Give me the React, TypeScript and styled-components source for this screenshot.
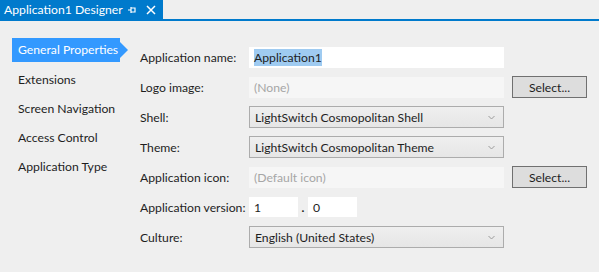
import React from "react";
import styled, { createGlobalStyle } from "styled-components";

const Global = createGlobalStyle`
  html, body { margin: 0; padding: 0; background: #efefef; }
  body { font-family: Lato, "Noto Sans", sans-serif; font-size: 12.2px; color: #1e1e1e; }
  * { box-sizing: border-box; }
`;

const Page = styled.div`
  width: 599px;
  height: 272px;
  background: #efefef;
  overflow: hidden;
`;

const TabStrip = styled.div`
  display: flex;
  border-bottom: 2px solid #007acc;
`;

const Tab = styled.div`
  display: flex;
  align-items: center;
  width: 163px;
  height: 19px;
  background: #007acc;
  color: #fff;
  padding-left: 4px;
  font-size: 12.2px;
`;

const TabTitle = styled.span`
  flex: 1;
  white-space: nowrap;
`;

const TabIcon = styled.span`
  display: flex;
  align-items: center;
  justify-content: center;
  width: 14px;
  height: 14px;
  margin-right: 5px;
`;

const Body = styled.div`
  display: flex;
  padding: 17px 0 0 12px;
`;

const Nav = styled.nav`
  display: flex;
  flex-direction: column;
  gap: 5px;
  width: 116px;
  margin-right: 12px;
`;

const NavItem = styled.div<{ $active?: boolean }>`
  position: relative;
  height: 24px;
  line-height: 24px;
  padding-left: 6px;
  width: 108px;
  white-space: nowrap;
  background: ${(p) => (p.$active ? "#3399ff" : "transparent")};
  color: ${(p) => (p.$active ? "#fff" : "#1e1e1e")};
  margin-bottom: ${(p) => (p.$active ? "1px" : "0")};
  &::after {
    content: "";
    display: ${(p) => (p.$active ? "block" : "none")};
    position: absolute;
    right: -8px;
    top: 4px;
    border-style: solid;
    border-width: 8px 0 8px 8px;
    border-color: transparent transparent transparent #3399ff;
  }
`;

const Form = styled.div`
  display: grid;
  grid-template-columns: 109px 255px 8px 75px;
  grid-auto-rows: 30px;
  margin-top: 4px;
  align-items: center;
`;

const Label = styled.div`
  white-space: nowrap;
  grid-column: 1;
`;

const FieldCell = styled.div`
  grid-column: 2;
  display: flex;
  align-items: center;
`;

const TextBox = styled.div<{ $disabled?: boolean }>`
  height: 21px;
  width: 100%;
  display: flex;
  align-items: center;
  padding-left: 5px;
  background: ${(p) => (p.$disabled ? "#f6f6f6" : "#ffffff")};
  color: ${(p) => (p.$disabled ? "#a6a6a6" : "#1e1e1e")};
  white-space: nowrap;
`;

const Highlight = styled.span`
  background: #9fcbf1;
  padding: 1px 0;
`;

const Combo = styled.div`
  height: 22px;
  width: 100%;
  display: flex;
  align-items: center;
  justify-content: space-between;
  padding: 0 8px 0 5px;
  border: 1px solid #acacac;
  background: linear-gradient(#efefef, #e6e6e6);
  white-space: nowrap;
`;

const Button = styled.div`
  grid-column: 4;
  height: 22px;
  display: flex;
  align-items: center;
  justify-content: center;
  border: 1px solid #707070;
  background: #dddddd;
`;

const VersionBox = styled.div`
  width: 49px;
  height: 20px;
  background: #fff;
  padding-left: 5px;
  display: flex;
  align-items: center;
`;

const Dot = styled.span`
  width: 10px;
  text-align: center;
  font-weight: bold;
`;

const Chevron = () => (
  <svg width="7" height="5" viewBox="0 0 7 5">
    <path d="M0.5 1 L3.5 4 L6.5 1" fill="none" stroke="#9a9a9a" strokeWidth="1" />
  </svg>
);

const navItems = ["General Properties", "Extensions", "Screen Navigation", "Access Control", "Application Type"];

export default function App() {
  return (
    <Page>
      <Global />
      <TabStrip>
        <Tab>
          <TabTitle>Application1 Designer</TabTitle>
          <TabIcon>
            <svg width="10" height="10" viewBox="0 0 10 10">
              <path d="M1 5 H4 M4 2 V8 M4 3 H8 V7 H4" fill="none" stroke="#fff" strokeWidth="1.2" />
            </svg>
          </TabIcon>
          <TabIcon>
            <svg width="10" height="10" viewBox="0 0 10 10">
              <path d="M1 1 L9 9 M9 1 L1 9" fill="none" stroke="#fff" strokeWidth="1.5" />
            </svg>
          </TabIcon>
        </Tab>
      </TabStrip>
      <Body>
        <Nav>
          {navItems.map((n, i) => (
            <NavItem key={n} $active={i === 0}>{n}</NavItem>
          ))}
        </Nav>
        <Form>
          <Label>Application name:</Label>
          <FieldCell><TextBox><Highlight>Application1</Highlight></TextBox></FieldCell>

          <Label>Logo image:</Label>
          <FieldCell><TextBox $disabled>(None)</TextBox></FieldCell>
          <Button>Select...</Button>

          <Label>Shell:</Label>
          <FieldCell><Combo>LightSwitch Cosmopolitan Shell<Chevron /></Combo></FieldCell>

          <Label>Theme:</Label>
          <FieldCell><Combo>LightSwitch Cosmopolitan Theme<Chevron /></Combo></FieldCell>

          <Label>Application icon:</Label>
          <FieldCell><TextBox $disabled>(Default icon)</TextBox></FieldCell>
          <Button>Select...</Button>

          <Label>Application version:</Label>
          <FieldCell>
            <VersionBox>1</VersionBox>
            <Dot>.</Dot>
            <VersionBox>0</VersionBox>
          </FieldCell>

          <Label>Culture:</Label>
          <FieldCell><Combo>English (United States)<Chevron /></Combo></FieldCell>
        </Form>
      </Body>
    </Page>
  );
}
